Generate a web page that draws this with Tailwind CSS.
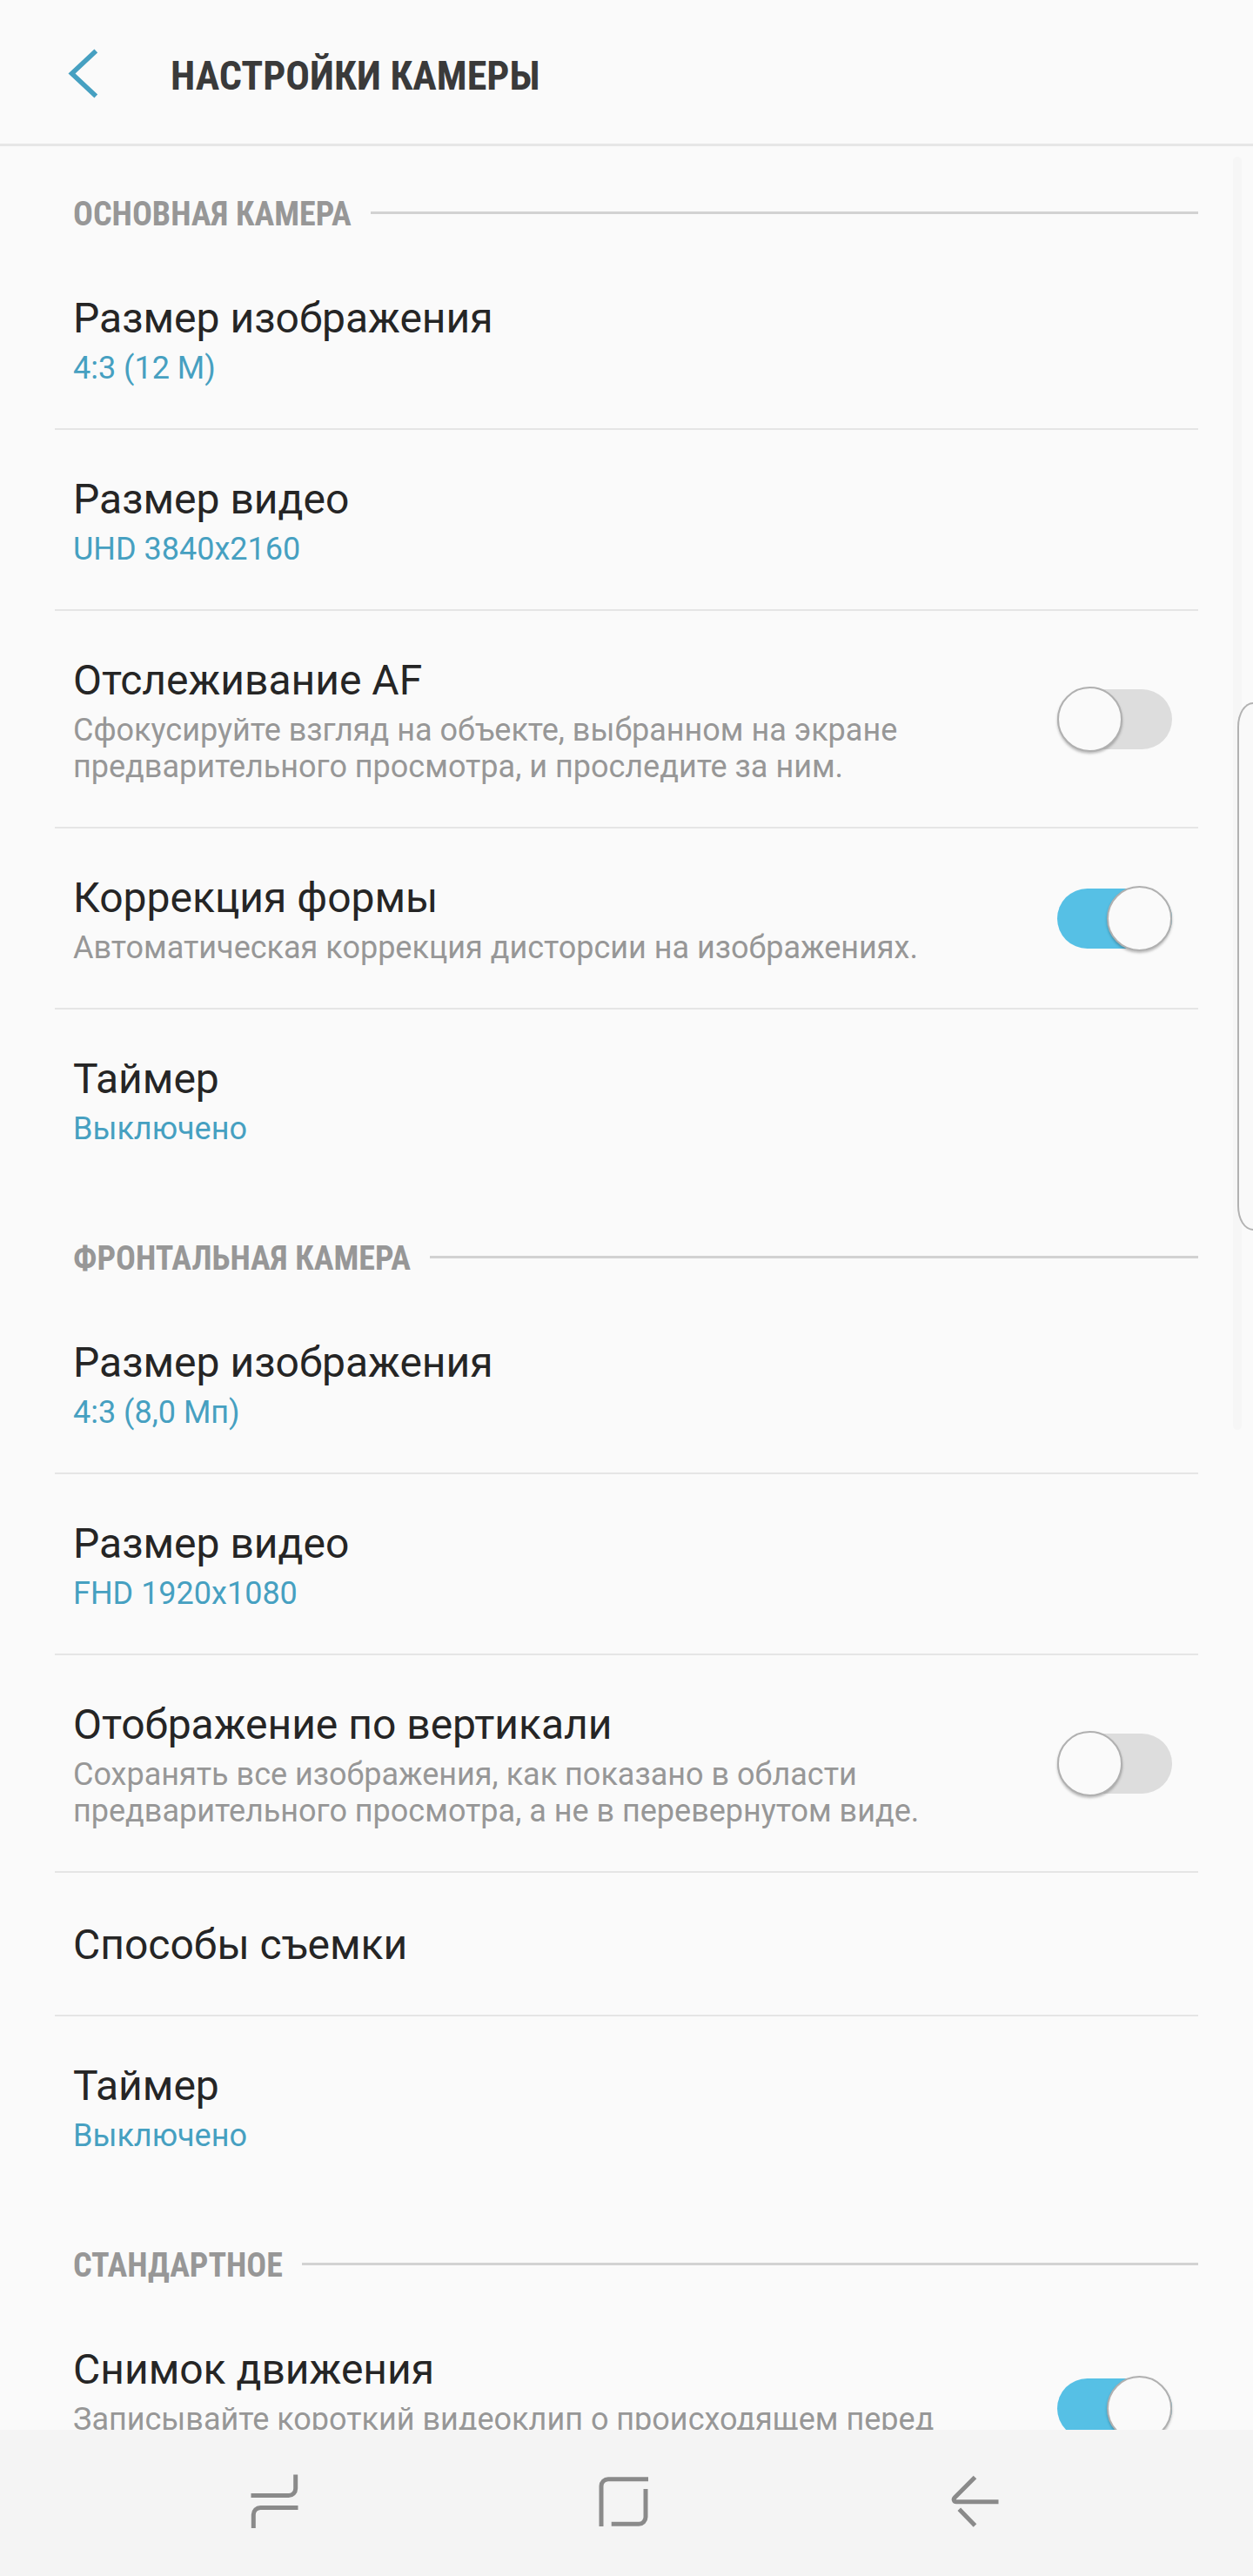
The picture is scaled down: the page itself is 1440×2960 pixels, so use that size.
<!DOCTYPE html>
<html lang="ru">
<head>
  <meta charset="UTF-8" />
  <meta name="viewport" content="width=device-width, initial-scale=1.0"/>
  <title>Настройки камеры</title>
  <script src="https://cdn.jsdelivr.net/npm/@tailwindcss/browser@4"></script>
</head>
<body class="bg-[#fafafa] font-['Roboto',sans-serif]">

  <div class="relative flex flex-col h-screen overflow-hidden">
    <!-- Top Bar -->
    <header class="flex items-center shrink-0 h-[168px] pl-[78px] border-b-3 border-[#e6e6e6]">
      <button type="button" aria-label="Назад">
        <svg class="block w-9 h-[60px]" viewBox="0 0 36 60" fill="none" stroke="#46a0c1" stroke-width="5.5">
          <path d="M32.3 5.5 4.5 31.5 32.3 57.5"/>
        </svg>
      </button>
      <h1 class="ml-[82px] pt-2 text-[46px]/14 font-bold text-[#3a3a3a] font-['Roboto_Condensed','Roboto',sans-serif]">НАСТРОЙКИ КАМЕРЫ</h1>
    </header>

    <!-- Settings -->
    <main class="flex-1 min-h-0 overflow-y-auto [scrollbar-width:none] px-[63px] space-y-0.5">
      <section>
        <h2 class="flex items-center gap-[22px] h-[118px] pt-[34px] pl-[21px] text-[38px]/12 font-bold text-[#979797] font-['Roboto_Condensed','Roboto',sans-serif]">
          <span class="pt-1">ОСНОВНАЯ КАМЕРА</span> <span class="flex-1 h-[3px] bg-[#d2d2d2]"></span>
        </h2>
        <div class="divide-y-2 divide-[#e5e5e5]">
          <button type="button" class="block w-full pl-[21px] pt-[52px] pb-12 text-left">
            <span class="block text-5xl/14 text-[#252525]">Размер изображения</span>
            <span class="block mt-2 text-4xl/[42px] text-[#46a0c1]">4:3 (12 M)</span>
          </button>
          <button type="button" class="block w-full pl-[21px] pt-[52px] pb-12 text-left">
            <span class="block text-5xl/14 text-[#252525]">Размер видео</span>
            <span class="block mt-2 text-4xl/[42px] text-[#46a0c1]">UHD 3840x2160</span>
          </button>
          <label class="flex items-center justify-between pl-[21px] pr-[30px]">
            <span class="block w-[1000px] pt-[52px] pb-12">
              <span class="block text-5xl/14 text-[#252525]">Отслеживание AF</span>
              <span class="block mt-2 text-4xl/[42px] text-[#979797]">Сфокусируйте взгляд на объекте, выбранном на экране предварительного просмотра, и проследите за ним.</span>
            </span>
            <input type="checkbox" role="switch" class="appearance-none flex items-center shrink-0 w-[132px] h-[69px] rounded-full bg-[#dddddd] checked:bg-[#56c0e5] before:block before:size-[75px] before:shrink-0 before:rounded-full before:bg-[#fafafa] before:border-2 before:border-[#b0b0b0] before:shadow-[0_2px_3px_rgba(0,0,0,0.25)] checked:before:ml-[57px]"/>
          </label>
          <label class="flex items-center justify-between pl-[21px] pr-[30px]">
            <span class="block w-[1000px] pt-[52px] pb-12">
              <span class="block text-5xl/14 text-[#252525]">Коррекция формы</span>
              <span class="block mt-2 text-4xl/[42px] text-[#979797]">Автоматическая коррекция дисторсии на изображениях.</span>
            </span>
            <input type="checkbox" role="switch" checked class="appearance-none flex items-center shrink-0 w-[132px] h-[69px] rounded-full bg-[#dddddd] checked:bg-[#56c0e5] before:block before:size-[75px] before:shrink-0 before:rounded-full before:bg-[#fafafa] before:border-2 before:border-[#b0b0b0] before:shadow-[0_2px_3px_rgba(0,0,0,0.25)] checked:before:ml-[57px]"/>
          </label>
          <button type="button" class="block w-full pl-[21px] pt-[52px] pb-12 text-left">
            <span class="block text-5xl/14 text-[#252525]">Таймер</span>
            <span class="block mt-2 text-4xl/[42px] text-[#46a0c1]">Выключено</span>
          </button>
        </div>
      </section>

      <section>
        <h2 class="flex items-center gap-[22px] h-[118px] pt-[34px] pl-[21px] text-[38px]/12 font-bold text-[#979797] font-['Roboto_Condensed','Roboto',sans-serif]">
          <span class="pt-1">ФРОНТАЛЬНАЯ КАМЕРА</span> <span class="flex-1 h-[3px] bg-[#d2d2d2]"></span>
        </h2>
        <div class="divide-y-2 divide-[#e5e5e5]">
          <button type="button" class="block w-full pl-[21px] pt-[52px] pb-12 text-left">
            <span class="block text-5xl/14 text-[#252525]">Размер изображения</span>
            <span class="block mt-2 text-4xl/[42px] text-[#46a0c1]">4:3 (8,0 Мп)</span>
          </button>
          <button type="button" class="block w-full pl-[21px] pt-[52px] pb-12 text-left">
            <span class="block text-5xl/14 text-[#252525]">Размер видео</span>
            <span class="block mt-2 text-4xl/[42px] text-[#46a0c1]">FHD 1920x1080</span>
          </button>
          <label class="flex items-center justify-between pl-[21px] pr-[30px]">
            <span class="block w-[1000px] pt-[52px] pb-12">
              <span class="block text-5xl/14 text-[#252525]">Отображение по вертикали</span>
              <span class="block mt-2 text-4xl/[42px] text-[#979797]">Сохранять все изображения, как показано в области предварительного просмотра, а не в перевернутом виде.</span>
            </span>
            <input type="checkbox" role="switch" class="appearance-none flex items-center shrink-0 w-[132px] h-[69px] rounded-full bg-[#dddddd] checked:bg-[#56c0e5] before:block before:size-[75px] before:shrink-0 before:rounded-full before:bg-[#fafafa] before:border-2 before:border-[#b0b0b0] before:shadow-[0_2px_3px_rgba(0,0,0,0.25)] checked:before:ml-[57px]"/>
          </label>
          <button type="button" class="block w-full pl-[21px] pt-[55px] pb-[52px] text-left">
            <span class="block text-5xl/14 text-[#252525]">Способы съемки</span>
          </button>
          <button type="button" class="block w-full pl-[21px] pt-[52px] pb-12 text-left">
            <span class="block text-5xl/14 text-[#252525]">Таймер</span>
            <span class="block mt-2 text-4xl/[42px] text-[#46a0c1]">Выключено</span>
          </button>
        </div>
      </section>

      <section>
        <h2 class="flex items-center gap-[22px] h-[118px] pt-[34px] pl-[21px] text-[38px]/12 font-bold text-[#979797] font-['Roboto_Condensed','Roboto',sans-serif]">
          <span class="pt-1">СТАНДАРТНОЕ</span> <span class="flex-1 h-[3px] bg-[#d2d2d2]"></span>
        </h2>
        <div class="divide-y-2 divide-[#e5e5e5]">
          <label class="flex items-center justify-between pl-[21px] pr-[30px]">
            <span class="block w-[1000px] pt-[52px] pb-12">
              <span class="block text-5xl/14 text-[#252525]">Снимок движения</span>
              <span class="block mt-2 text-4xl/[42px] text-[#979797]">Записывайте короткий видеоклип о происходящем перед съемкой каждого изображения.</span>
            </span>
            <input type="checkbox" role="switch" checked class="appearance-none flex items-center shrink-0 w-[132px] h-[69px] rounded-full bg-[#dddddd] checked:bg-[#56c0e5] before:block before:size-[75px] before:shrink-0 before:rounded-full before:bg-[#fafafa] before:border-2 before:border-[#b0b0b0] before:shadow-[0_2px_3px_rgba(0,0,0,0.25)] checked:before:ml-[57px]"/>
          </label>
        </div>
      </section>
    </main>

    <!-- Scroll thumb and edge panel handle -->
    <div class="absolute right-[13px] top-[180px] w-2.5 h-[1463px] rounded-full bg-[#f6f6f6]"></div>
    <div class="absolute right-0 top-[807px] w-[18px] h-[607px] rounded-l-[18px_28px] border-2 border-r-0 border-[#b2b2b2] bg-[#f9f9f9]"></div>

    <!-- Navigation Bar -->
    <nav class="grid grid-cols-3 place-items-center shrink-0 h-[168px] pl-[114px] pr-[119px] pb-0.5 bg-[#f4f4f4]">
      <button type="button" aria-label="Последние">
        <svg class="block w-[60px] h-[70px]" viewBox="0 0 60 70" fill="none" stroke="#8a8a8a" stroke-width="5">
          <path d="M3.5 27.5H46.7a8 8 0 0 0 8-8V3.5M57.5 41.5H14.3a8 8 0 0 0-8 8V65"/>
        </svg>
      </button>
      <button type="button" aria-label="Главный экран">
        <svg class="block w-[60px] h-[70px]" viewBox="0 0 60 70" fill="none" stroke="#8a8a8a" stroke-width="5">
          <path d="M4 63V16.7a8 8 0 0 1 8-8H58M55 20V52.3a8 8 0 0 1-8 8H15.7"/>
        </svg>
      </button>
      <button type="button" aria-label="Назад">
        <svg class="block w-[60px] h-[70px]" viewBox="0 0 60 70" fill="none" stroke="#8a8a8a" stroke-width="5">
          <path d="M30.5 6.5 7.3 29.7c-2.3 2.3-.8 5 1.7 5H57.5M12.3 43.3 30.5 62"/>
        </svg>
      </button>
    </nav>
  </div>
</body>
</html>
